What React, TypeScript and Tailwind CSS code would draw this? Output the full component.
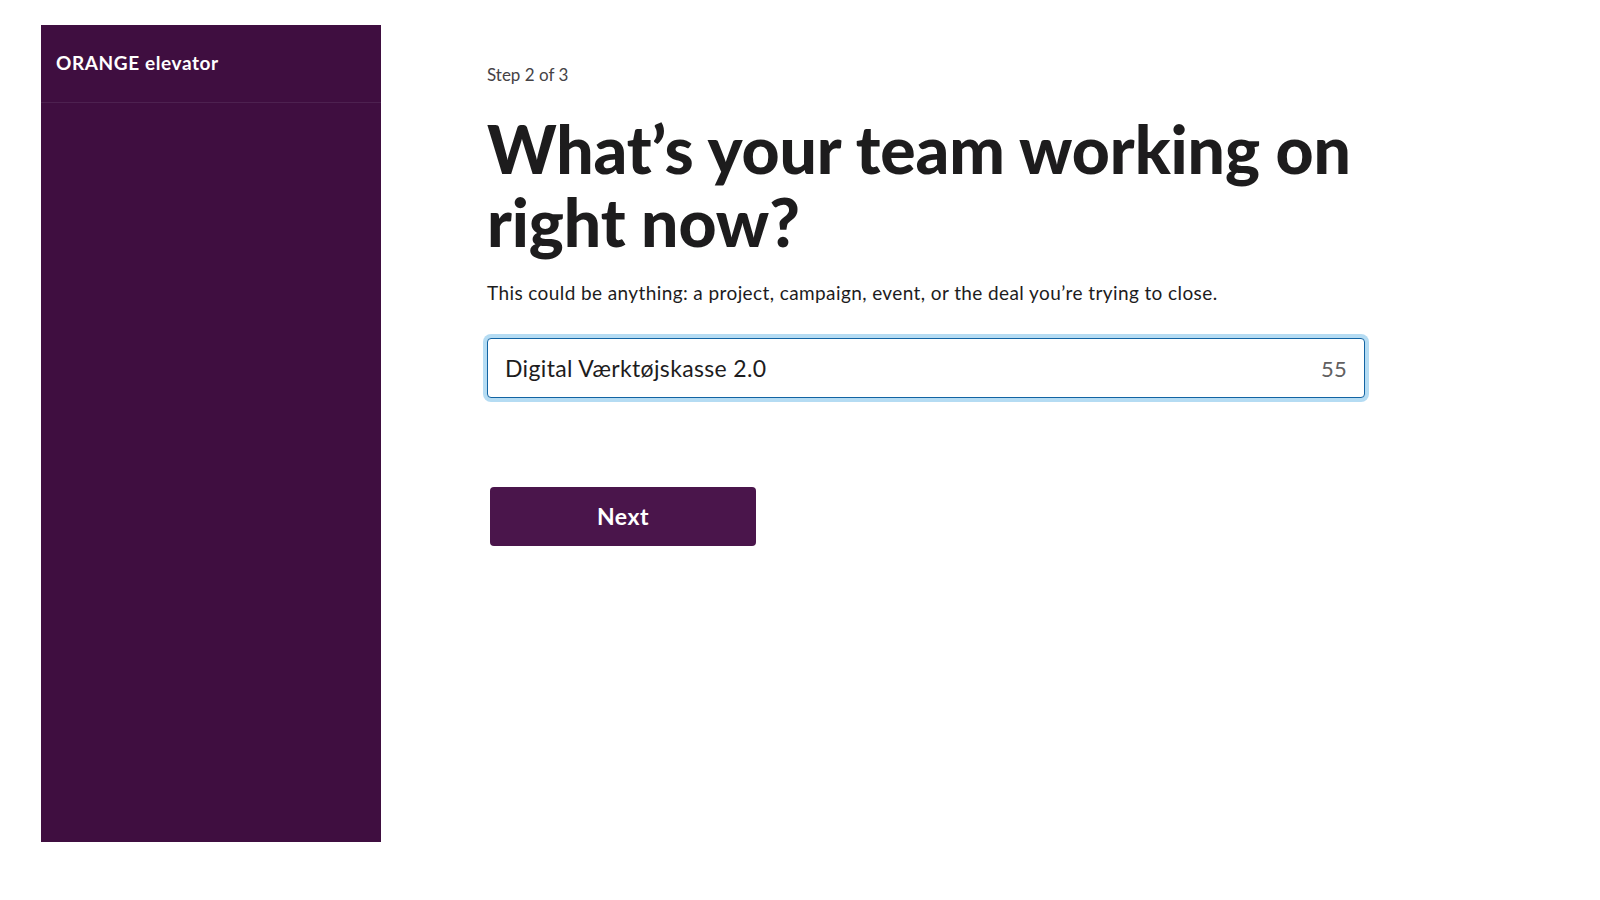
import { useState } from "react";

const MAX_LEN = 80;

export default function App() {
  const [name, setName] = useState("Digital Værktøjskasse 2.0");
  const remaining = MAX_LEN - name.length;

  return (
    <div className="flex min-h-screen bg-white pl-[41px] pt-[25px] font-['Lato','Liberation_Sans',sans-serif] text-[#1d1c1d]">
      <aside className="flex h-[817px] w-[340px] shrink-0 flex-col bg-[#3f0e40]">
        <div className="flex h-[78px] items-center border-b border-[#4d2150] px-[15px]">
          <span className="text-[19px] font-bold tracking-[0.6px] text-white">ORANGE elevator</span>
        </div>
      </aside>

      <main className="ml-[106px] w-[900px] pt-[38px]">
        <p className="text-[17px] leading-6 text-[#454245]">Step 2 of 3</p>
        <h1 className="mt-[25px] text-[66px] font-black leading-[73px] tracking-[-0.1px] text-[#1d1c1d]">
          What’s your team working on right now?
        </h1>
        <p className="mt-[21px] text-[19px] leading-[27px] tracking-[0.4px] text-[#1d1c1d]">
          This could be anything: a project, campaign, event, or the deal you’re trying to close.
        </p>

        <div className="mt-[32px] flex h-[60px] w-[878px] items-center rounded-[4px] border border-[#1264a3] bg-white px-[17px] shadow-[0_0_0_4px_#b5dcf3]">
          <input
            value={name}
            onChange={(e) => setName(e.target.value.slice(0, MAX_LEN))}
            className="min-w-0 flex-1 bg-transparent text-[23px] tracking-[0.35px] text-[#1d1c1d] outline-none"
          />
          <span className="ml-3 text-[22px] tracking-[0.3px] text-[#616061]">{remaining}</span>
        </div>

        <button className="ml-[3px] mt-[89px] flex h-[59px] w-[266px] items-center justify-center rounded-[4px] bg-[#4a154b] text-[23px] font-bold tracking-[0.5px] text-white">
          Next
        </button>
      </main>
    </div>
  );
}
